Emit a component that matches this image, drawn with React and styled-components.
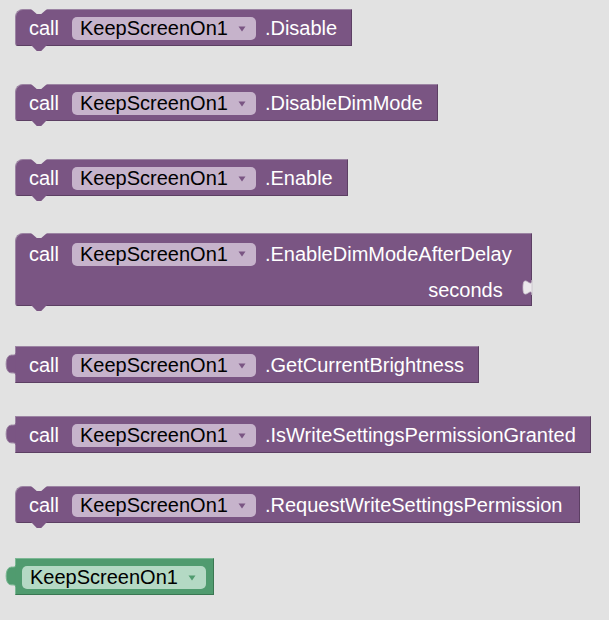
import React from "react";
import styled, { createGlobalStyle, css } from "styled-components";

const BG = "#e2e2e2";

const palettes = {
  purple: {
    body: "#7a5583",
    light: "#9c84a3",
    dark: "#5c3f63",
    field: "#c6b3cb",
    arrow: "#7a5583",
  },
  green: {
    body: "#509b6f",
    light: "#7cb894",
    dark: "#3a7752",
    field: "#b4d9c4",
    arrow: "#509b6f",
  },
};

const Global = createGlobalStyle`
  html, body { margin: 0; padding: 0; background: ${BG}; }
  body { font-family: "Liberation Sans", Arial, sans-serif; }
`;

const Workspace = styled.div`
  width: 609px;
  height: 620px;
  box-sizing: border-box;
  padding: 9px 0 0 15px;
  display: flex;
  flex-direction: column;
  align-items: flex-start;
  background: ${BG};
  overflow: hidden;
`;

const Block = styled.div`
  position: relative;
  display: flex;
  flex-direction: column;
  margin-top: ${(p) => p.$mt || 0}px;
  background: ${(p) => p.$pal.body};
  border-top: 1px solid ${(p) => p.$pal.light};
  border-left: 1px solid ${(p) => p.$pal.light};
  border-bottom: 1px solid ${(p) => p.$pal.dark};
  border-right: 1px solid ${(p) => p.$pal.dark};
  color: #fff;
  font-size: 20px;
  ${(p) =>
    p.$statement &&
    css`
      border-top-left-radius: 8px;
      border-bottom-left-radius: 3px;
      &::before {
        content: "";
        position: absolute;
        top: -1px;
        left: 15px;
        width: 16px;
        height: 5px;
        background: ${BG};
        clip-path: polygon(0 0, 100% 0, 64% 100%, 36% 100%);
      }
      &::after {
        content: "";
        position: absolute;
        bottom: -6px;
        left: 15px;
        width: 16px;
        height: 6px;
        background: ${p.$pal.body};
        clip-path: polygon(0 0, 100% 0, 64% 100%, 36% 100%);
      }
    `}
`;

const Row = styled.div`
  display: flex;
  align-items: center;
  box-sizing: border-box;
  height: ${(p) => p.$h || 35}px;
  padding: ${(p) => (p.$pt != null ? p.$pt : 2)}px
    ${(p) => (p.$pr != null ? p.$pr : 14)}px 0
    ${(p) => (p.$pl != null ? p.$pl : 13)}px;
  justify-content: ${(p) => (p.$end ? "flex-end" : "flex-start")};
  white-space: nowrap;
`;

const Keyword = styled.span`
  margin-right: 13px;
`;

const Method = styled.span`
  margin-left: 9px;
`;

const Dropdown = styled.span`
  display: inline-flex;
  align-items: center;
  height: 23px;
  padding: 0 10px 0 8px;
  gap: 10px;
  border-radius: 5px;
  background: ${(p) => p.$pal.field};
  color: #000;
`;

const Tab = styled.svg`
  position: absolute;
  left: -11px;
  top: 6px;
  width: 12px;
  height: 22px;
  overflow: visible;
`;

const Socket = styled.svg`
  position: absolute;
  right: -1px;
  top: ${(p) => p.$top}px;
  width: 11px;
  height: 16px;
  overflow: visible;
`;

const Arrow = ({ color }) => (
  <svg width="8" height="6" viewBox="0 0 8 6">
    <path d="M0.5 0.5 L7.5 0.5 L4 5.5 Z" fill={color} />
  </svg>
);

const OutputTab = ({ pal }) => (
  <Tab viewBox="0 0 12 22">
    <path
      d="M11.5 0.5 C9.5 3 7 1.5 4.5 2.5 C0 4.5 0 17.5 4.5 19.5 C7 20.5 9.5 19 11.5 21.5 Z"
      fill={pal.body}
      stroke={pal.light}
      strokeWidth="1"
    />
    <rect x="10.5" y="0" width="1.5" height="22" fill={pal.body} />
  </Tab>
);

const Component = ({ pal }) => (
  <Dropdown $pal={pal}>
    KeepScreenOn1
    <Arrow color={pal.arrow} />
  </Dropdown>
);

const CallBlock = ({ method, mt, output, pr }) => {
  const pal = palettes.purple;
  return (
    <Block $pal={pal} $mt={mt} $statement={!output}>
      {output && <OutputTab pal={pal} />}
      <Row $pr={pr}>
        <Keyword>call</Keyword>
        <Component pal={pal} />
        <Method>{method}</Method>
      </Row>
    </Block>
  );
};

export default function App() {
  const purple = palettes.purple;
  const green = palettes.green;
  return (
    <>
      <Global />
      <Workspace>
        <CallBlock method=".Disable" />
        <CallBlock method=".DisableDimMode" mt={38} />
        <CallBlock method=".Enable" mt={38} />
        <Block $pal={purple} $mt={37} $statement>
          <Row $h={38} $pr={19}>
            <Keyword>call</Keyword>
            <Component pal={purple} />
            <Method>.EnableDimModeAfterDelay</Method>
          </Row>
          <Row $h={33} $pt={4} $end $pr={28}>
            seconds
          </Row>
          <Socket $top={46} viewBox="0 0 11 16">
            <path
              d="M11 15 C11 5 2 23 2 7.5 S11 10 11 0 Z"
              fill="#ece9ec"
              stroke="#c9c0cb"
              strokeWidth="0.8"
            />
          </Socket>
        </Block>
        <CallBlock method=".GetCurrentBrightness" mt={40} output />
        <CallBlock method=".IsWriteSettingsPermissionGranted" mt={33} output />
        <CallBlock method=".RequestWriteSettingsPermission" mt={33} pr={17} />
        <Block $pal={green} $mt={35}>
          <OutputTab pal={green} />
          <Row $pl={6} $pr={7}>
            <Component pal={green} />
          </Row>
        </Block>
      </Workspace>
    </>
  );
}
